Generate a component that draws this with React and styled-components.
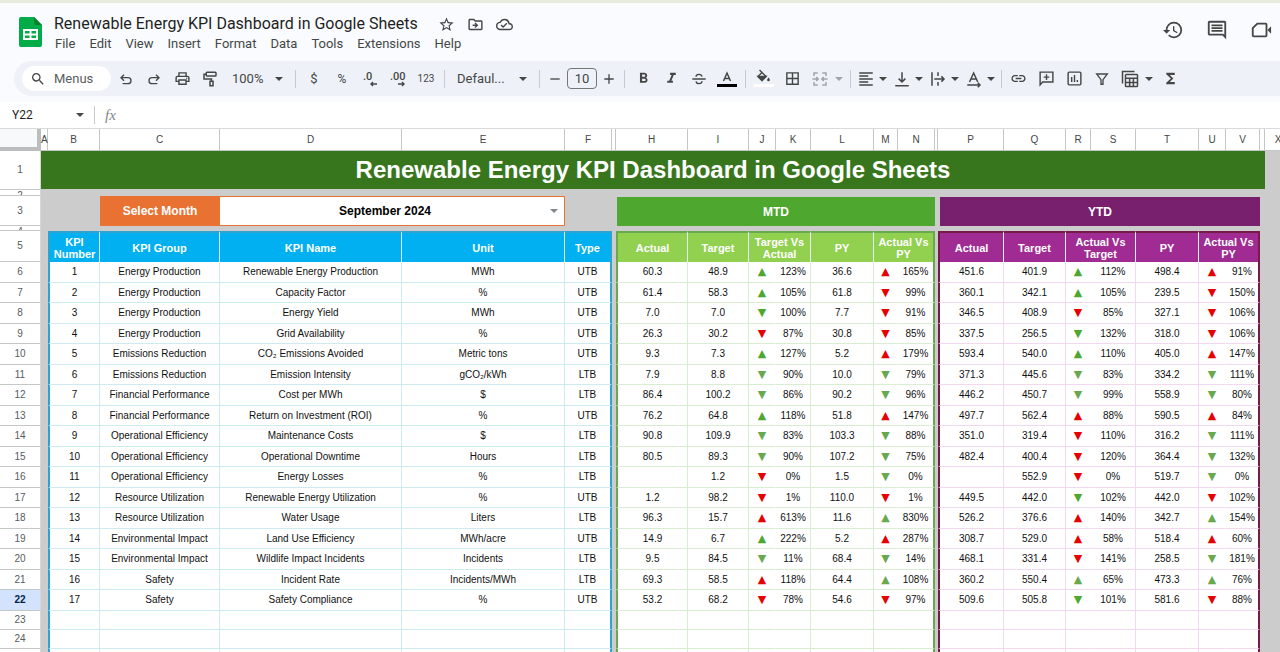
import React, { useState } from 'react';
import styled, { createGlobalStyle, css } from 'styled-components';
import {
  MdStarBorder,
  MdOutlineDriveFileMove,
  MdOutlineCloudDone,
  MdHistory,
  MdOutlineComment,
  MdSearch,
  MdOutlinePrint,
  MdFormatBold,
  MdFormatItalic,
  MdOutlineBorderAll,
  MdFormatAlignLeft,
  MdVerticalAlignBottom,
  MdLink,
  MdFunctions,
} from 'react-icons/md';

const GlobalStyle = createGlobalStyle`
  * {
    box-sizing: border-box;
  }

  body {
    margin: 0;
    overflow: hidden;
    background: #fff;
    font-family: "Liberation Sans", Arial, sans-serif;
  }

  button, input, select {
    margin: 0;
    padding: 0;
    border: none;
    outline: none;
    background: transparent;
    font-family: Roboto, sans-serif;
    color: #444746;
  }
`;

const Page = styled.div`
  display: flex;
  flex-direction: column;
  height: 100vh;
  overflow: hidden;
`;

const Top = styled.header`
  background: #f9fbfe;
  border-top: 3px solid #e6ecdb;
  padding-bottom: 6px;
`;

const TitleBar = styled.div`
  display: flex;
  align-items: flex-start;
  height: 58px;
  padding: 10px 8px 0 18px;
`;

const Logo = styled.svg`
  width: 25px;
  height: 32px;
  margin-top: 3px;
`;

const TitleBlock = styled.div`
  display: flex;
  flex-direction: column;
  margin-left: 11px;
`;

const TitleRow = styled.div`
  display: flex;
  align-items: center;
  gap: 12px;
  height: 22px;
`;

const DocTitle = styled.input`
  width: 372px;
  color: #1f1f1f;
  font-size: 16px;
  line-height: 22px;
`;

const IconButton = styled.button`
  display: flex;
  align-items: center;
  justify-content: center;
  font-size: ${(p) => p.$size || 17}px;
`;

const Menu = styled.nav`
  display: flex;
  gap: 14px;
  padding: 0 1px;

  button {
    font-size: 13px;
    line-height: 18px;
  }
`;

const TopActions = styled.div`
  display: flex;
  gap: 22px;
  margin-left: auto;
  padding-top: 6px;
`;

const Toolbar = styled.div`
  display: flex;
  align-items: center;
  height: 35px;
  margin-left: 14px;
  padding-left: 8px;
  border-radius: 18px 0 0 18px;
  background: #eef2f8;
`;

const MenuSearch = styled.label`
  display: flex;
  align-items: center;
  gap: 8px;
  width: 89px;
  height: 25px;
  margin-right: 1px;
  padding-left: 8px;
  border-radius: 13px;
  background: #fff;
  color: #444746;
  font-size: 16px;

  input {
    width: 50px;
    font-size: 13px;
  }

  input::placeholder {
    color: #5a5d60;
    opacity: 1;
  }
`;

const Tool = styled.button`
  display: flex;
  flex: none;
  align-items: center;
  justify-content: center;
  width: ${(p) => (p.$narrow ? 22 : 28)}px;
  height: 26px;
  font-size: ${(p) => p.$size || 17}px;
`;

const ToolPair = styled.button`
  display: flex;
  flex: none;
  align-items: center;
  gap: ${(p) => (p.$wide ? 6 : 4)}px;
  width: ${(p) => (p.$wide ? 40 : 36)}px;
  height: 26px;
  padding-left: ${(p) => (p.$wide ? 5 : 2)}px;
  opacity: ${(p) => (p.disabled ? 0.45 : 1)};
  font-size: 18px;
`;

const ToolText = styled.button`
  display: flex;
  flex: none;
  align-items: center;
  justify-content: space-between;
  width: ${(p) => p.$width}px;
  height: 26px;
  padding: 0 8px;
  font-size: 13px;
`;

const Separator = styled.span`
  flex: none;
  width: 1px;
  height: 18px;
  margin: 0 ${(p) => (p.$tight ? 2 : 4)}px;
  background: #c7cbd1;
`;

const FontSize = styled.input`
  width: 30px;
  height: 21px;
  margin: 0 1px;
  border: 1px solid #747775;
  border-radius: 4px;
  font-size: 13px;
  text-align: center;
`;

const FormulaBar = styled.div`
  display: flex;
  align-items: center;
  height: 27px;
  padding-left: 12px;
  border-bottom: 1px solid #d9dadb;
  color: #444746;
`;

const NameBox = styled.input`
  width: 64px;
  margin-right: 0;
  color: #1f1f1f;
  font-size: 12px;
`;

const Fx = styled.span`
  margin: 0 8px 0 10px;
  padding-left: 10px;
  border-left: 1px solid #c7cbd1;
  color: #80868b;
  font-family: "Liberation Serif", serif;
  font-size: 15px;
  font-style: italic;
  line-height: 18px;
`;

const FormulaInput = styled.input`
  flex: 1;
  font-size: 12px;
`;

const Sheet = styled.main`
  flex: 1;
  overflow: hidden;
  background: #ccc;
`;

const Grid = styled.table`
  width: 100%;
  min-width: 1292px;
  table-layout: fixed;
  border-spacing: 0;
  color: #111;
  font-size: 10px;
  line-height: 12px;
  text-align: center;

  th, td {
    padding: 0;
    white-space: nowrap;
  }
`;

const Row = styled.tr`
  height: ${(p) => p.$height}px;
`;

const Corner = styled.th`
  border-right: 4px solid #bdbdbd;
  border-bottom: 4px solid #bdbdbd;
  background: #f8f9fa;
`;

const ColumnHead = styled.th`
  border-right: 1px solid #c4c7c5;
  border-bottom: 1px solid #c4c7c5;
  background: #fff;
  color: #444746;
  font-weight: normal;
`;

const RowHead = styled.th`
  border-right: 1px solid #d5d7d9;
  border-bottom: 1px solid #c4c7c5;
  background: ${(p) => (p.$active ? '#d3e3fd' : '#fff')};
  color: ${(p) => (p.$active ? '#041e49' : '#575b5f')};
  font-weight: ${(p) => (p.$active ? 'bold' : 'normal')};
`;

const Clip = styled.div`
  height: ${(p) => p.$height}px;
  line-height: 11px;
  overflow: hidden;
`;

const Gap = styled.td`
  background: #ccc;
`;

const Banner = styled.td`
  border-bottom: 1px solid #ccc;
  background: #38761d;
  color: #fff;
  font-size: 24px;
  font-weight: bold;
  line-height: 30px;
`;

const MonthLabel = styled.td`
  background: #e97132;
  color: #fff;
  font-size: 12px;
  font-weight: bold;
`;

const MonthCell = styled.td`
  border: 1px solid #e97132;
  border-left: none;
  background: #fff;
`;

const MonthField = styled.div`
  display: flex;
  align-items: center;
  padding-right: 6px;
  color: #80868b;

  select {
    flex: 1;
    appearance: none;
    color: #000;
    font-family: "Liberation Sans", Arial, sans-serif;
    font-size: 12px;
    font-weight: bold;
    text-align: center;
    text-align-last: center;
  }
`;

const PeriodTitle = styled.td`
  border-top: 1px solid #ccc;
  border-left: ${(p) => p.$inset}px solid #ccc;
  background: ${(p) => p.$color};
  color: #fff;
  font-size: 12px;
  font-weight: bold;
`;

const palettes = {
  kpi: { head: '#00b0f0', edge: '#2fa3cf', line: '#cdebf1' },
  mtd: { head: '#92d050', edge: '#6aa84f', line: '#d8edd2' },
  ytd: { head: '#a02b93', edge: '#741b47', line: '#f3d9f0' },
};

// outer edges of a block are drawn by its first and last cells
const blockEdges = css`
  ${(p) => p.$first && `border-left: 2px solid ${palettes[p.$block].edge};`}
  ${(p) => p.$last && `border-right: 2px solid ${palettes[p.$block].edge};`}
`;

const BlockHead = styled.th`
  border-top: 2px solid ${(p) => palettes[p.$block].edge};
  border-right: 1px solid #e4f3f8;
  background: ${(p) => palettes[p.$block].head};
  color: #fff;
  font-size: 11px;
  font-weight: bold;
  ${blockEdges}
`;

const Cell = styled.td`
  border-right: 1px solid ${(p) => (p.$open ? 'transparent' : palettes[p.$block].line)};
  border-bottom: 1px solid ${(p) => palettes[p.$block].line};
  background: #fff;
  ${blockEdges}
`;

const Trend = styled.span`
  color: ${(p) => p.$color};
  font-family: "DejaVu Sans", sans-serif;
  font-size: 11px;
  line-height: 12px;
`;

const columns = [
  ['A', 7], ['B', 52], ['C', 120], ['D', 182], ['E', 163], ['F', 47], ['', 4],
  ['H', 72], ['I', 61], ['J', 27], ['K', 35], ['L', 63], ['M', 24], ['N', 37], ['', 3],
  ['P', 66], ['Q', 62], ['R', 25], ['S', 45], ['T', 63], ['U', 27], ['V', 34], ['', 5],
];

// group, name, unit, type, then actual / target / trend / py / trend for MTD and YTD.
// A trend is direction (u/d), colour (g/r) and the percentage.
const kpis = [
  ['Energy Production', 'Renewable Energy Production', 'MWh', 'UTB', '60.3 48.9 ug123 36.6 ur165', '451.6 401.9 ug112 498.4 ur91'],
  ['Energy Production', 'Capacity Factor', '%', 'UTB', '61.4 58.3 ug105 61.8 dr99', '360.1 342.1 ug105 239.5 dr150'],
  ['Energy Production', 'Energy Yield', 'MWh', 'UTB', '7.0 7.0 dg100 7.7 dr91', '346.5 408.9 dr85 327.1 dr106'],
  ['Energy Production', 'Grid Availability', '%', 'UTB', '26.3 30.2 dr87 30.8 dr85', '337.5 256.5 dg132 318.0 dr106'],
  ['Emissions Reduction', 'CO₂ Emissions Avoided', 'Metric tons', 'UTB', '9.3 7.3 ug127 5.2 ur179', '593.4 540.0 ug110 405.0 ur147'],
  ['Emissions Reduction', 'Emission Intensity', 'gCO₂/kWh', 'LTB', '7.9 8.8 dg90 10.0 dg79', '371.3 445.6 dg83 334.2 dg111'],
  ['Financial Performance', 'Cost per MWh', '$', 'LTB', '86.4 100.2 dg86 90.2 dg96', '446.2 450.7 dg99 558.9 dg80'],
  ['Financial Performance', 'Return on Investment (ROI)', '%', 'UTB', '76.2 64.8 ug118 51.8 ur147', '497.7 562.4 ur88 590.5 ur84'],
  ['Operational Efficiency', 'Maintenance Costs', '$', 'LTB', '90.8 109.9 dg83 103.3 dg88', '351.0 319.4 dr110 316.2 dg111'],
  ['Operational Efficiency', 'Operational Downtime', 'Hours', 'LTB', '80.5 89.3 dg90 107.2 dg75', '482.4 400.4 dr120 364.4 dg132'],
  ['Operational Efficiency', 'Energy Losses', '%', 'LTB', '- 1.2 dr0 1.5 dg0', '- 552.9 dr0 519.7 dg0'],
  ['Resource Utilization', 'Renewable Energy Utilization', '%', 'UTB', '1.2 98.2 dr1 110.0 dr1', '449.5 442.0 dg102 442.0 dr102'],
  ['Resource Utilization', 'Water Usage', 'Liters', 'LTB', '96.3 15.7 ur613 11.6 ug830', '526.2 376.6 ur140 342.7 ug154'],
  ['Environmental Impact', 'Land Use Efficiency', 'MWh/acre', 'UTB', '14.9 6.7 ug222 5.2 ur287', '308.7 529.0 ur58 518.4 ur60'],
  ['Environmental Impact', 'Wildlife Impact Incidents', 'Incidents', 'LTB', '9.5 84.5 dg11 68.4 dg14', '468.1 331.4 dr141 258.5 dg181'],
  ['Safety', 'Incident Rate', 'Incidents/MWh', 'LTB', '69.3 58.5 ur118 64.4 ug108', '360.2 550.4 ug65 473.3 ug76'],
  ['Safety', 'Safety Compliance', '%', 'UTB', '53.2 68.2 dr78 54.6 dr97', '509.6 505.8 dg101 581.6 dr88'],
];

const Svg = ({ size = 16, children }) => (
  <svg width={size} height={size} viewBox="0 0 24 24" fill="none" stroke="currentColor" strokeWidth="2">
    {children}
  </svg>
);

const Caret = () => (
  <svg width="8" height="4" viewBox="0 0 8 4" fill="currentColor">
    <path d="M0 0h8L4 4z" />
  </svg>
);

const SheetsLogo = () => (
  <Logo viewBox="0 0 25 32">
    <path d="M3 1h13l8 8v20a2 2 0 0 1-2 2H3a2 2 0 0 1-2-2V3a2 2 0 0 1 2-2z" fill="#00ac47" />
    <path d="M16 1l8 8h-6a2 2 0 0 1-2-2z" fill="#00832d" />
    <path d="M5 13h15v11H5zM7 15v2.500h4.500V15zM13.500 15v2.500H18V15zM7 19.500V22h4.500v-2.500zM13.500 19.500V22H18v-2.500z" fill="#fff" fillRule="evenodd" />
  </Logo>
);

const UndoIcon = () => (
  <Svg>
    <path d="M7 19h8a4.500 4.500 0 0 0 0-9H5M9 5.500L4.500 10 9 14.500" />
  </Svg>
);

const RedoIcon = () => (
  <Svg>
    <path d="M17 19H9a4.500 4.500 0 0 1 0-9h10M15 5.500L19.500 10 15 14.500" />
  </Svg>
);

const RollerIcon = () => (
  <Svg size={18}>
    <rect x="7" y="3" width="13" height="5" rx="1" />
    <path d="M7 5.500H4V12h10v3" />
    <rect x="12" y="15" width="4" height="6" />
  </Svg>
);

const DecimalIcon = ({ digits, flip }) => (
  <svg width="20" height="20" viewBox="0 0 20 20" fill="none" stroke="currentColor" strokeWidth="1.400">
    <text x={flip ? 2 : 3} y="11" fill="currentColor" stroke="none" fontSize="11" fontWeight="500" fontFamily="Roboto">{digits}</text>
    <path d={flip ? 'M10 15h6M14 13l2 2-2 2' : 'M17 15h-6M13 13l-2 2 2 2'} />
  </svg>
);

const StrikeIcon = () => (
  <Svg>
    <path d="M2 12h20M16.500 8.500C16 6 14 5 12 5 9.500 5 7.500 6.300 7.500 8.500M7.500 15.500C8 18 10 19 12 19c2.500 0 4.500-1.300 4.500-3.500" />
  </Svg>
);

const TextColorIcon = () => (
  <svg width="20" height="20" viewBox="0 0 20 20" fill="none" stroke="currentColor" strokeWidth="1.500">
    <path d="M6.500 12L10 4l3.500 8M7.700 9.500h4.600" />
    <path d="M0 16.500h20" stroke="#000" strokeWidth="3" />
  </svg>
);

const FillIcon = () => (
  <svg width="20" height="20" viewBox="0 0 20 20" fill="none" stroke="currentColor" strokeWidth="1.400">
    <path d="M5.500 1l3 3M8 3.500l4 4-4 4-4-4z" />
    <path d="M4 7.500h8l-4 4z" fill="currentColor" />
    <path d="M14.500 8.500c1 1.200 1.400 1.800 1.400 2.400a1.400 1.400 0 0 1-2.800 0c0-.6.400-1.200 1.400-2.400z" fill="currentColor" stroke="none" />
    <path d="M0 16.500h20" stroke="#fff" strokeWidth="3" />
  </svg>
);

const MergeIcon = () => (
  <Svg size={18}>
    <path d="M9 4H4v4M15 4h5v4M9 20H4v-4M15 20h5v-4M2 12h7M22 12h-7M7 9.500L9.500 12 7 14.500M17 9.500L14.500 12l2.500 2.500" />
  </Svg>
);

const AlignBottomIcon = () => (
  <Svg size={18}>
    <path d="M12 3v13M7.500 11.500L12 16l4.500-4.500M3 21h18" />
  </Svg>
);

const WrapIcon = () => (
  <Svg size={18}>
    <path d="M4 3v18M12 3v5M12 16v5M7 12h13M16.500 8.500L20 12l-3.500 3.500" />
  </Svg>
);

const RotateIcon = () => (
  <Svg size={18}>
    <path d="M6 16L11.500 4 17 16M8 12h7M3 20h16M17 17l3 3-3 3" />
  </Svg>
);

const AddCommentIcon = () => (
  <Svg size={17}>
    <path d="M3 21V3h18v14H6.500zM12 6v8M8 10h8" />
  </Svg>
);

const ChartIcon = () => (
  <Svg size={17}>
    <rect x="3" y="3" width="18" height="18" rx="1.500" />
    <path d="M8 10v7M12 7v10M16 14v3" />
  </Svg>
);

const FilterIcon = () => (
  <Svg>
    <path d="M4 4.500h16l-6.500 8.500v7h-3v-7z" />
  </Svg>
);

const TableViewIcon = () => (
  <Svg size={18}>
    <path d="M2 18V2h16" />
    <rect x="6" y="6" width="16" height="16" rx="1" />
    <path d="M6 11h16M6 16.500h16M11.500 11v11M16.500 11v11" />
  </Svg>
);

const CameraIcon = () => (
  <Svg size={22}>
    <path d="M8 5h9a1 1 0 0 1 1 1v12a1 1 0 0 1-1 1H4a1 1 0 0 1-1-1v-8z" />
    <path d="M19 12l4-4v8z" fill="currentColor" stroke="none" />
  </Svg>
);

function TrendCells({ block, code, type, last }) {
  const up = code[0] === 'u';
  const green = type === 'LTB' ? '#6aa84f' : '#4ea72e';
  return (
    <>
      <Cell $block={block} $open>
        <Trend $color={code[1] === 'g' ? green : '#e60000'}>{up ? '▲' : '▼'}</Trend>
      </Cell>
      <Cell $block={block} $last={last}>{code.slice(2)}%</Cell>
    </>
  );
}

function PeriodCells({ block, values, type }) {
  const [actual, target, trend, py, pyTrend] = values.split(' ');
  return (
    <>
      <Cell $block={block} $first>{actual === '-' ? '' : actual}</Cell>
      <Cell $block={block}>{target}</Cell>
      <TrendCells block={block} code={trend} type={type} />
      <Cell $block={block}>{py}</Cell>
      <TrendCells block={block} code={pyTrend} type={type} last />
    </>
  );
}

function PeriodHeads({ block, compare }) {
  return (
    <>
      <BlockHead $block={block} $first>Actual</BlockHead>
      <BlockHead $block={block}>Target</BlockHead>
      <BlockHead $block={block} colSpan={2}>{compare[0]}<br />{compare[1]}</BlockHead>
      <BlockHead $block={block}>PY</BlockHead>
      <BlockHead $block={block} $last colSpan={2}>Actual Vs<br />PY</BlockHead>
    </>
  );
}

function EmptyRow({ number }) {
  const blocks = [['kpi', 5], ['mtd', 7], ['ytd', 7]];
  return (
    <Row $height={19}>
      <RowHead>{number}</RowHead>
      <Gap />
      {blocks.map(([block, count]) => (
        <React.Fragment key={block}>
          {Array.from({ length: count }, (_, i) => (
            <Cell
              key={i}
              $block={block}
              $first={i === 0}
              $last={i === count - 1}
              $open={count === 7 && (i === 2 || i === 5)}
            />
          ))}
          <Gap />
        </React.Fragment>
      ))}
      <Gap />
    </Row>
  );
}

function App() {
  const [title, setTitle] = useState('Renewable Energy KPI Dashboard in Google Sheets');
  const [month, setMonth] = useState('September 2024');
  const menus = ['File', 'Edit', 'View', 'Insert', 'Format', 'Data', 'Tools', 'Extensions', 'Help'];

  return (
    <Page>
      <GlobalStyle />
      <Top>
        <TitleBar>
          <SheetsLogo />
          <TitleBlock>
            <TitleRow>
              <DocTitle aria-label="Rename" value={title} onChange={(e) => setTitle(e.target.value)} />
              <IconButton aria-label="Star"><MdStarBorder /></IconButton>
              <IconButton aria-label="Move"><MdOutlineDriveFileMove /></IconButton>
              <IconButton aria-label="Saved to Drive"><MdOutlineCloudDone /></IconButton>
            </TitleRow>
            <Menu>
              {menus.map((name) => (
                <button key={name}>{name}</button>
              ))}
            </Menu>
          </TitleBlock>
          <TopActions>
            <IconButton $size={22} aria-label="Version history"><MdHistory /></IconButton>
            <IconButton $size={22} aria-label="Comments"><MdOutlineComment /></IconButton>
            <IconButton $size={22} aria-label="Join a call"><CameraIcon /></IconButton>
          </TopActions>
        </TitleBar>

        <Toolbar>
          <MenuSearch>
            <MdSearch />
            <input aria-label="Search the menus" placeholder="Menus" />
          </MenuSearch>
          <Tool aria-label="Undo"><UndoIcon /></Tool>
          <Tool aria-label="Redo"><RedoIcon /></Tool>
          <Tool aria-label="Print"><MdOutlinePrint /></Tool>
          <Tool aria-label="Paint format"><RollerIcon /></Tool>
          <ToolText $width={67}>100% <Caret /></ToolText>
          <Separator />
          <Tool $size={13}>$</Tool>
          <Tool $size={12}>%</Tool>
          <Tool aria-label="Decrease decimal places"><DecimalIcon digits=".0" /></Tool>
          <Tool aria-label="Increase decimal places"><DecimalIcon digits=".00" flip /></Tool>
          <Tool $size={10}>123</Tool>
          <Separator />
          <ToolText $width={86}>Defaul... <Caret /></ToolText>
          <Separator />
          <Tool $narrow aria-label="Decrease font size"><Svg><path d="M5 12h14" /></Svg></Tool>
          <FontSize aria-label="Font size" defaultValue="10" />
          <Tool $narrow aria-label="Increase font size"><Svg><path d="M5 12h14M12 5v14" /></Svg></Tool>
          <Separator />
          <Tool aria-label="Bold"><MdFormatBold /></Tool>
          <Tool aria-label="Italic"><MdFormatItalic /></Tool>
          <Tool aria-label="Strikethrough"><StrikeIcon /></Tool>
          <Tool aria-label="Text color"><TextColorIcon /></Tool>
          <Separator />
          <Tool aria-label="Fill color"><FillIcon /></Tool>
          <Tool aria-label="Borders"><MdOutlineBorderAll /></Tool>
          <ToolPair $wide disabled aria-label="Merge cells"><MergeIcon /><Caret /></ToolPair>
          <Separator />
          <ToolPair aria-label="Horizontal align"><MdFormatAlignLeft /><Caret /></ToolPair>
          <ToolPair aria-label="Vertical align"><AlignBottomIcon /><Caret /></ToolPair>
          <ToolPair aria-label="Text wrapping"><WrapIcon /><Caret /></ToolPair>
          <ToolPair aria-label="Text rotation"><RotateIcon /><Caret /></ToolPair>
          <Separator $tight />
          <Tool aria-label="Insert link"><MdLink /></Tool>
          <Tool aria-label="Insert comment"><AddCommentIcon /></Tool>
          <Tool aria-label="Insert chart"><ChartIcon /></Tool>
          <Tool aria-label="Create a filter"><FilterIcon /></Tool>
          <ToolPair $wide aria-label="Table views"><TableViewIcon /><Caret /></ToolPair>
          <Tool aria-label="Functions"><MdFunctions /></Tool>
        </Toolbar>
      </Top>

      <FormulaBar>
        <NameBox aria-label="Name box" defaultValue="Y22" />
        <Caret />
        <Fx>fx</Fx>
        <FormulaInput aria-label="Formula" />
      </FormulaBar>

      <Sheet>
        <Grid>
          <colgroup>
            <col width={41} />
            {columns.map(([, width], i) => (
              <col key={i} width={width} />
            ))}
            <col />
          </colgroup>
          <thead>
            <Row $height={22}>
              <Corner />
              {columns.map(([name], i) => (
                <ColumnHead key={i}>{name}</ColumnHead>
              ))}
              <ColumnHead>X</ColumnHead>
            </Row>
          </thead>
          <tbody>
            <Row $height={39}>
              <RowHead>1</RowHead>
              <Banner colSpan={23}>Renewable Energy KPI Dashboard in Google Sheets</Banner>
              <Gap />
            </Row>
            <Row $height={6}>
              <RowHead><Clip $height={5}>2</Clip></RowHead>
              <Gap colSpan={24} />
            </Row>
            <Row $height={30}>
              <RowHead>3</RowHead>
              <Gap colSpan={2} />
              <MonthLabel>Select Month</MonthLabel>
              <MonthCell colSpan={2}>
                <MonthField>
                  <select aria-label="Select Month" value={month} onChange={(e) => setMonth(e.target.value)}>
                    <option>August 2024</option>
                    <option>September 2024</option>
                    <option>October 2024</option>
                  </select>
                  <Caret />
                </MonthField>
              </MonthCell>
              <Gap colSpan={2} />
              <PeriodTitle colSpan={7} $inset={1} $color="#4ea72e">MTD</PeriodTitle>
              <Gap />
              <PeriodTitle colSpan={7} $inset={2} $color="#78206e">YTD</PeriodTitle>
              <Gap colSpan={2} />
            </Row>
            <Row $height={5}>
              <RowHead><Clip $height={4}>4</Clip></RowHead>
              <Gap colSpan={24} />
            </Row>
            <Row $height={31}>
              <RowHead>5</RowHead>
              <Gap />
              <BlockHead $block="kpi" $first>KPI<br />Number</BlockHead>
              <BlockHead $block="kpi">KPI Group</BlockHead>
              <BlockHead $block="kpi">KPI Name</BlockHead>
              <BlockHead $block="kpi">Unit</BlockHead>
              <BlockHead $block="kpi" $last>Type</BlockHead>
              <Gap />
              <PeriodHeads block="mtd" compare={['Target Vs', 'Actual']} />
              <Gap />
              <PeriodHeads block="ytd" compare={['Actual Vs', 'Target']} />
              <Gap colSpan={2} />
            </Row>
            {kpis.map(([group, name, unit, type, mtd, ytd], i) => (
              <Row key={name} $height={i % 2 ? 20 : 21}>
                <RowHead $active={i === 16}>{i + 6}</RowHead>
                <Gap />
                <Cell $block="kpi" $first>{i + 1}</Cell>
                <Cell $block="kpi">{group}</Cell>
                <Cell $block="kpi">{name}</Cell>
                <Cell $block="kpi">{unit}</Cell>
                <Cell $block="kpi" $last>{type}</Cell>
                <Gap />
                <PeriodCells block="mtd" values={mtd} type={type} />
                <Gap />
                <PeriodCells block="ytd" values={ytd} type={type} />
                <Gap colSpan={2} />
              </Row>
            ))}
            <EmptyRow number={23} />
            <EmptyRow number={24} />
            <EmptyRow number={25} />
          </tbody>
        </Grid>
      </Sheet>
    </Page>
  );
}

export default App;
